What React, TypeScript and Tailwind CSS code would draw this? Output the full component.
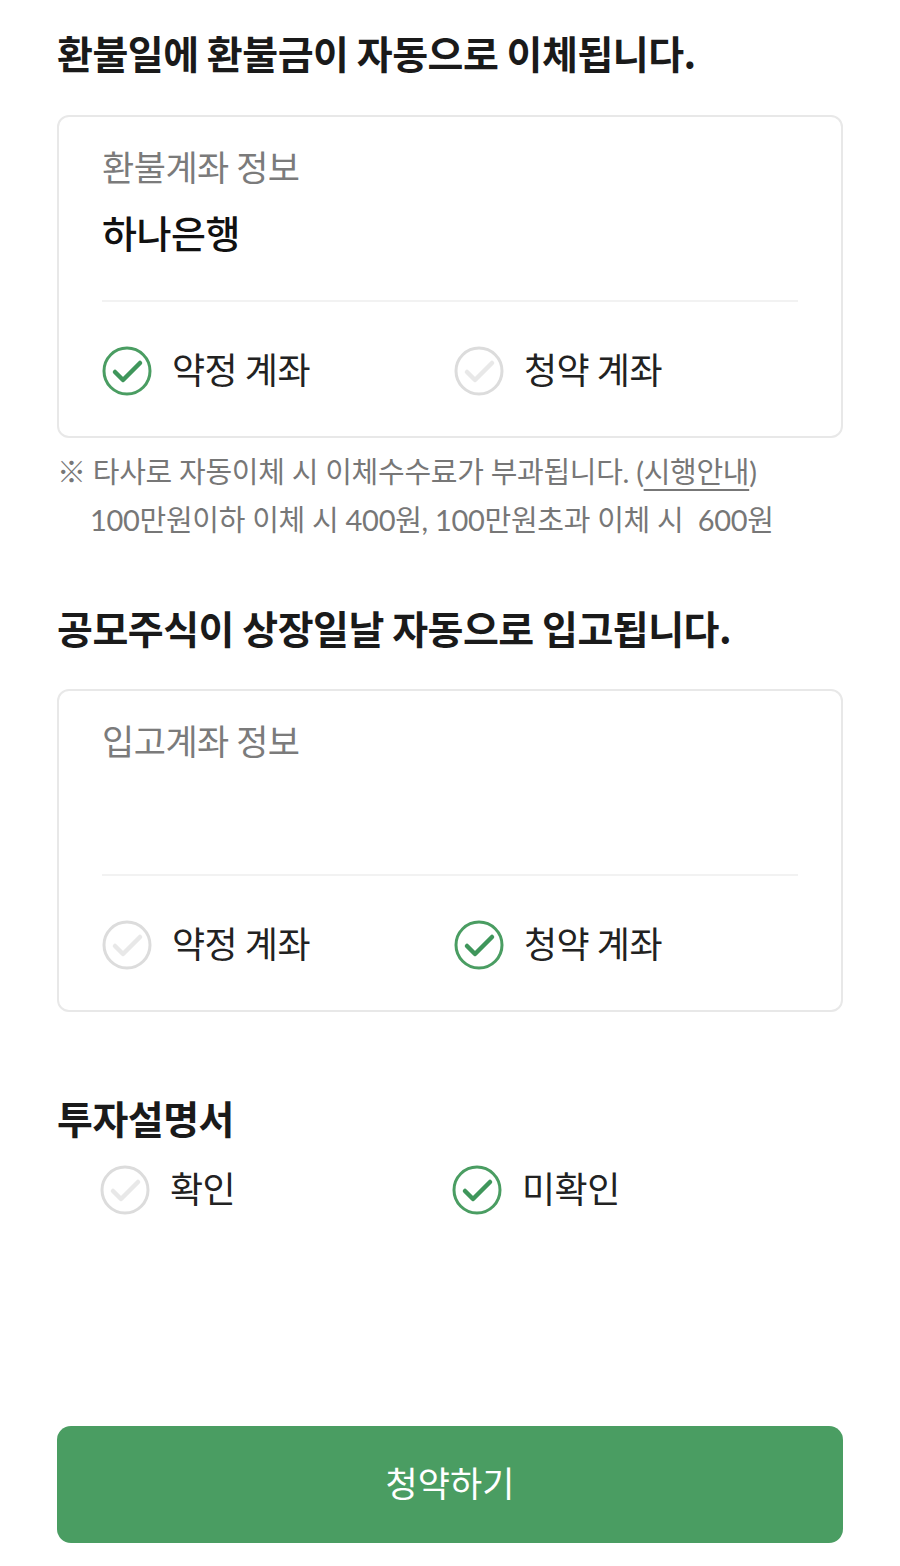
import React from 'react';

const KR = { fontFamily: '"Noto Sans CJK KR", "Noto Sans", sans-serif' };
const NOTE = { fontFamily: 'Lato, "Noto Sans CJK KR", sans-serif' };

const CheckCircle = ({ checked }: { checked: boolean }) => (
    <svg width="50" height="50" viewBox="0 0 50 50" className="shrink-0">
        <circle cx="25" cy="25" r="23" fill="white" stroke={checked ? '#4a9d62' : '#dcdcdc'} strokeWidth="3" />
        <path
            d="M13 26 L21 34 L38 17"
            fill="none"
            stroke={checked ? '#3f965b' : '#e8e8e8'}
            strokeWidth="4.5"
            strokeLinecap="round"
            strokeLinejoin="round"
        />
    </svg>
);

const Choice = ({ label, checked }: { label: string; checked: boolean }) => (
    <div className="flex h-[50px] items-center gap-5">
        <CheckCircle checked={checked} />
        <span className="mb-[6px] text-[36px] leading-[44px] tracking-[-0.5px] text-[#222]">{label}</span>
    </div>
);

const ChoiceRow = ({ options }: { options: { label: string; checked: boolean }[] }) => (
    <div className="grid grid-cols-[352px_1fr]">
        {options.map((o) => (
            <Choice key={o.label} label={o.label} checked={o.checked} />
        ))}
    </div>
);

const AccountCard = ({ title, value, first }: { title: string; value?: string; first: boolean }) => (
    <div className="mt-[37px] rounded-[12px] border-2 border-[#e8e8e8] px-[43px] pt-[29px] pb-[40px]">
        <p className="text-[35px] leading-[40px] tracking-[-0.5px] text-[#7b7b7b]">{title}</p>
        <p className="mt-[24px] h-[44px] text-[38px] leading-[44px] font-medium tracking-[-0.5px] text-[#111]">{value}</p>
        <div className="mt-[46px] h-[2px] bg-[#f2f2f2]" />
        <div className="mt-[44px]">
            <ChoiceRow
                options={[
                    { label: '약정 계좌', checked: first },
                    { label: '청약 계좌', checked: !first },
                ]}
            />
        </div>
    </div>
);

export default function App() {
    return (
        <div className="min-h-[1566px] bg-white px-[57px] pt-[26px] pb-[24px]" style={KR}>
            <h1 className="text-[39px] leading-[52px] font-bold tracking-[-0.5px] text-[#1a1a1a]">
                환불일에 환불금이 자동으로 이체됩니다.
            </h1>
            <AccountCard title="환불계좌 정보" value="하나은행" first={true} />

            <div className="mt-[10px] text-[29px] leading-[48px] tracking-[-0.3px] text-[#777]" style={NOTE}>
                <p>
                    ※ 타사로 자동이체 시 이체수수료가 부과됩니다. (
                    <span className="underline underline-offset-[6px] decoration-2">시행안내</span>)
                </p>
                <p className="pl-[33px] whitespace-pre">100만원이하 이체 시 400원, 100만원초과 이체 시  600원</p>
            </div>

            <h2 className="mt-[57px] text-[39px] leading-[52px] font-bold tracking-[-0.5px] text-[#1a1a1a]">
                공모주식이 상장일날 자동으로 입고됩니다.
            </h2>
            <div className="-mt-[1px]">
                <AccountCard title="입고계좌 정보" first={false} />
            </div>

            <h2 className="mt-[79px] text-[39px] leading-[52px] font-bold tracking-[-0.5px] text-[#1a1a1a]">
                투자설명서
            </h2>
            <div className="mt-[22px] pl-[43px]">
                <ChoiceRow
                    options={[
                        { label: '확인', checked: false },
                        { label: '미확인', checked: true },
                    ]}
                />
            </div>

            <button
                type="button"
                className="mt-[211px] flex h-[117px] w-full items-center justify-center rounded-[14px] bg-[#4a9d62] pb-[5px] text-[35px] text-white"
            >
                청약하기
            </button>
        </div>
    );
}
